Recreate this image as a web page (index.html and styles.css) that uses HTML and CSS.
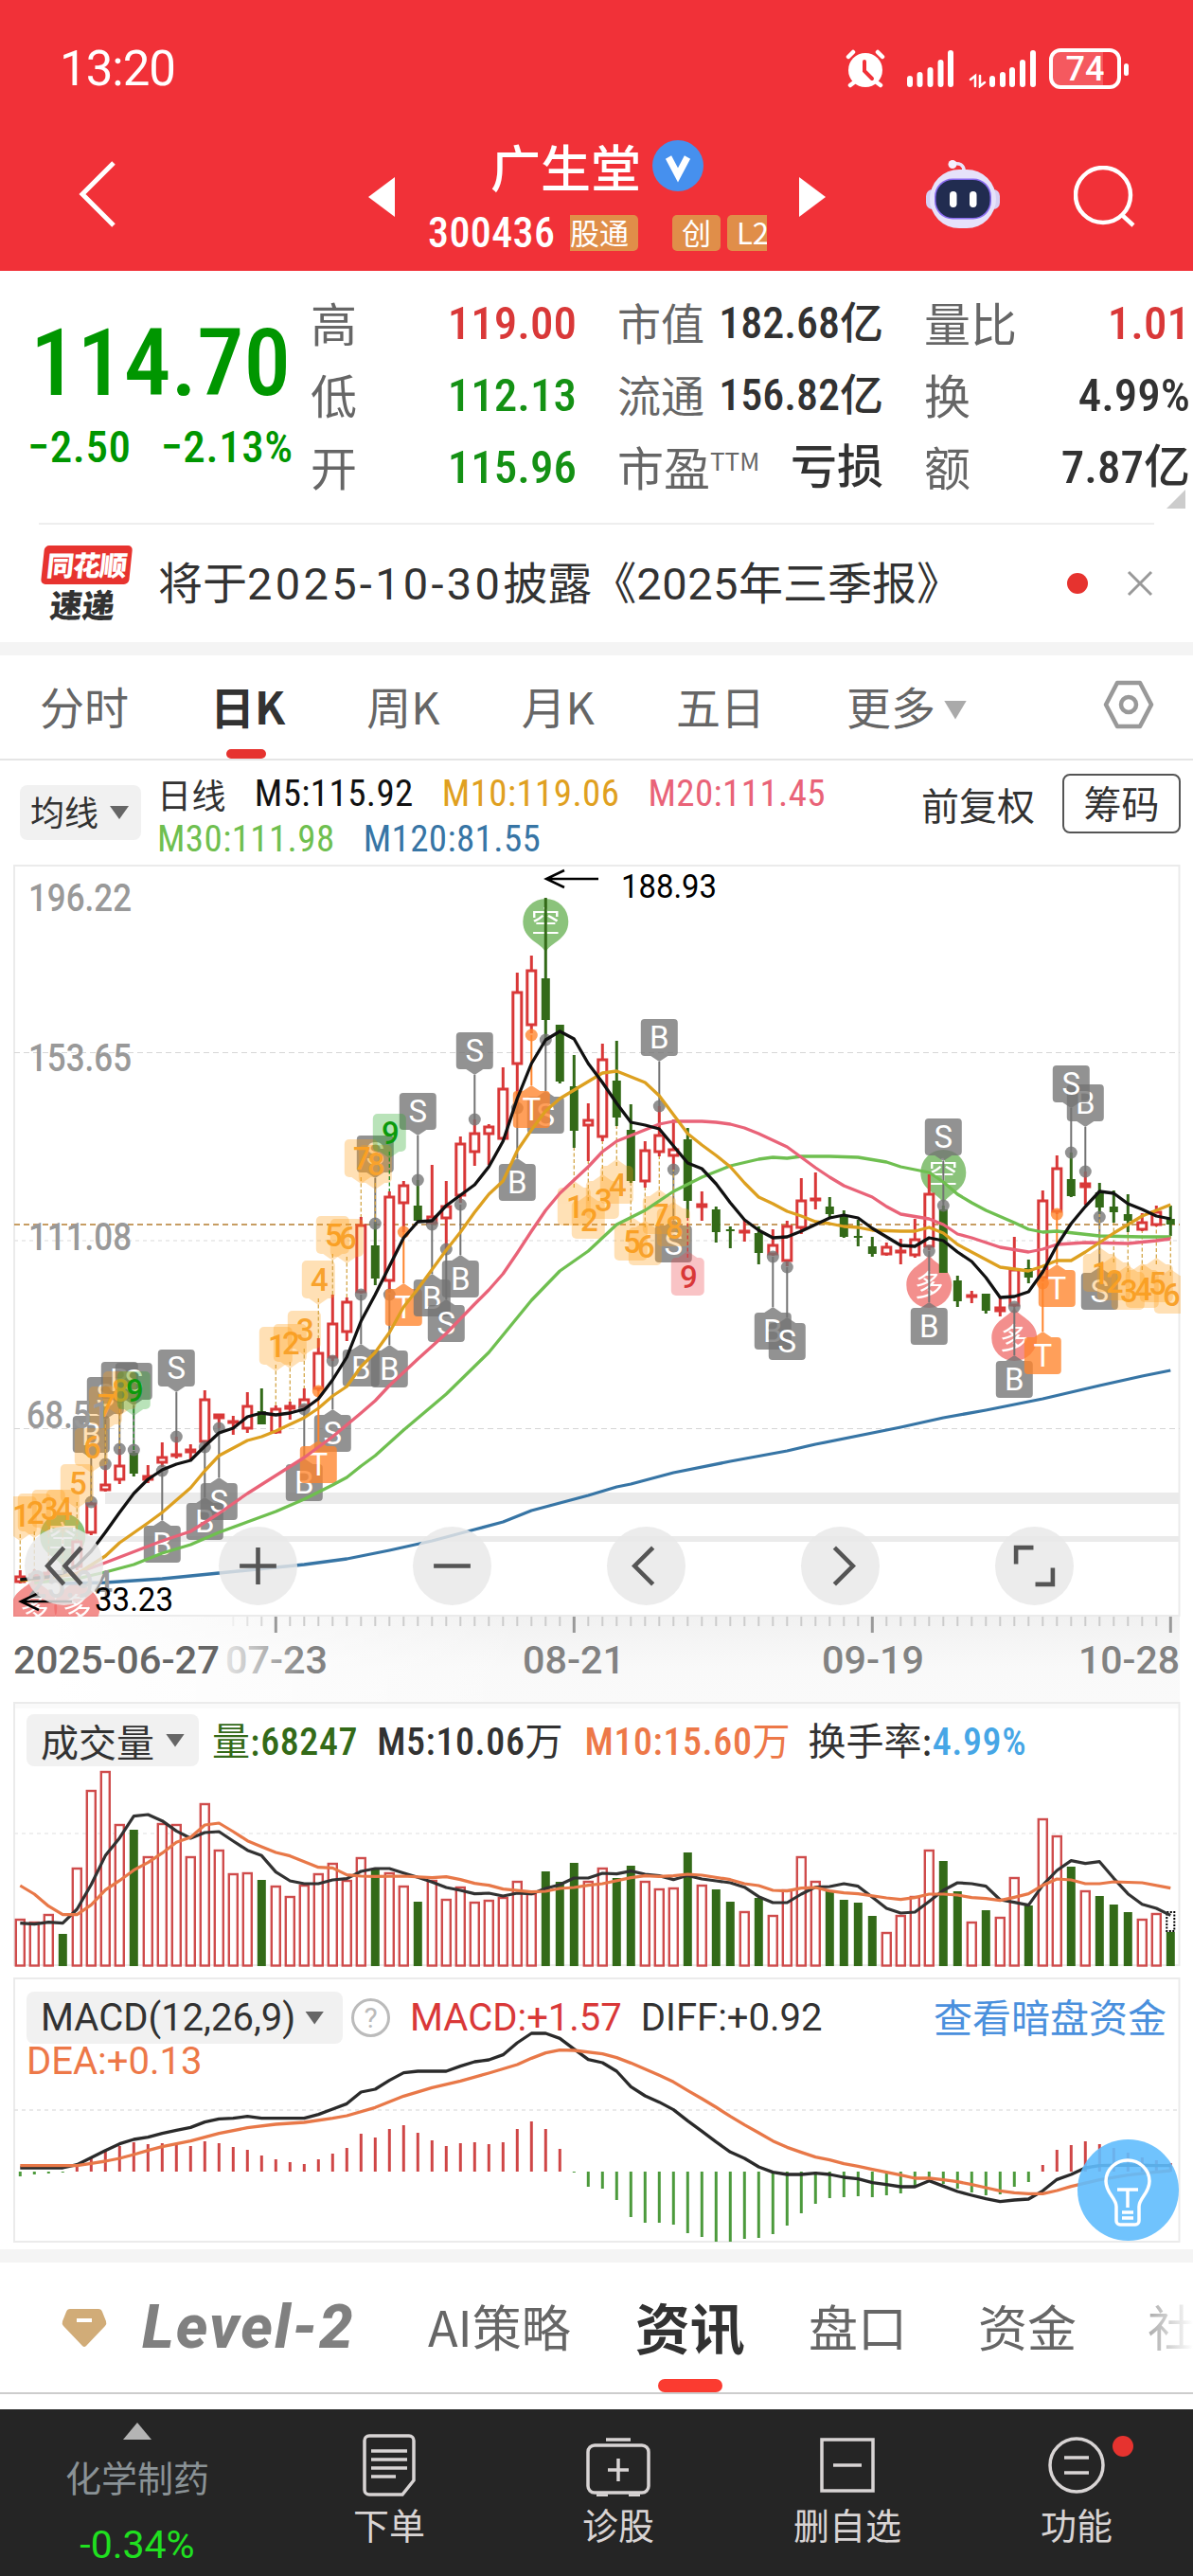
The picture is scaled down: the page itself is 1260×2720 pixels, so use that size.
FILE: index.html
```html
<!DOCTYPE html>
<html lang="zh-CN">
<head>
    <meta charset="UTF-8">
    <meta name="viewport" content="width=device-width, initial-scale=1.0">
    <title>广生堂 300436</title>
    <link rel="stylesheet" href="styles.css">
</head>
<body>
    <header class="header">
        <div class="status-bar">
            <span class="time num">13:20</span>
            <div class="status-icons">
                <svg width="42" height="42" viewBox="0 0 42 42" fill="none" stroke="#fff" stroke-width="4.500" stroke-linecap="round">
                    <circle cx="21" cy="23" r="18" fill="#fff" stroke="none"/>
                    <path d="M3 9l5-5M39 9l-5-5M9 36l-4 3M33 36l4 3" />
                    <path d="M20 14v10l8 8" stroke="#f13138" stroke-width="4"/>
                </svg>
                <svg class="signal" width="50" height="42" viewBox="0 0 50 42" stroke="#fff" stroke-width="6" stroke-linecap="round">
                    <path d="M3 32v6M13.500 28v10M24.500 23v15M35.500 15v23M46 5v33"/>
                </svg>
                <svg class="signal-two" width="72" height="42" viewBox="0 0 72 42" fill="none" stroke="#fff" stroke-width="6" stroke-linecap="round">
                    <path d="M2 33l5-4v11M12 29v11l5-4" stroke-width="2.500"/>
                    <path d="M25 32v6M36 28v10M46 23v15M57 15v23M68 5v33"/>
                </svg>
                <div class="battery"><span>74</span></div>
            </div>
        </div>
        <div class="nav-row">
            <svg class="back" width="42" height="72" viewBox="0 0 42 72" fill="none" stroke="#fff" stroke-width="5"><path d="M38 3L5 36l33 33"/></svg>
            <svg class="prev" width="28" height="42" viewBox="0 0 28 42" fill="#fff"><path d="M28 0v42L0 21z"/></svg>
            <div class="stock">
                <div class="stock-name">广生堂
                    <svg width="54" height="54" viewBox="0 0 54 54"><circle cx="27" cy="27" r="27" fill="#4690ee"/><path d="M17 18l10 19 10-19" fill="none" stroke="#fff" stroke-width="7"/></svg>
                </div>
                <div class="stock-code">
                    <span class="code num">300436</span>
                    <span class="tag tag-cut-left">股通</span>
                    <span class="tag tag-board">创</span>
                    <span class="tag tag-cut-right">L2</span>
                </div>
            </div>
            <svg class="next" width="28" height="42" viewBox="0 0 28 42" fill="#fff"><path d="M0 0v42l28-21z"/></svg>
            <svg class="robot" width="80" height="76" viewBox="0 0 80 76">
                <path d="M40 14C41 5 34 4 29 5" fill="none" stroke="#e9e4fb" stroke-width="3.500"/>
                <circle cx="28" cy="5.500" r="4.500" fill="#f4f0ff"/>
                <rect x="0" y="32" width="78" height="21" rx="7" fill="#d5d0f4"/>
                <rect x="4" y="11" width="70" height="62" rx="31" fill="#e6e2fa"/>
                <rect x="9" y="20.500" width="60" height="43" rx="19" fill="#8a6bf0"/>
                <rect x="10.500" y="22" width="57" height="40" rx="18" fill="#212c50"/>
                <rect x="25" y="34" width="7.500" height="17" rx="3.700" fill="#fff"/>
                <rect x="46" y="34" width="7.500" height="17" rx="3.700" fill="#fff"/>
            </svg>
            <svg class="search" width="66" height="66" viewBox="0 0 66 66" fill="none" stroke="#fff" stroke-width="4.500"><circle cx="31" cy="31" r="29"/><path d="M51 52l12 11"/></svg>
        </div>
    </header>

    <section class="quote">
        <div class="price-box">
            <div class="price num">114.70</div>
            <div class="change num"><span>−2.50</span><span>−2.13%</span></div>
        </div>
        <div class="quote-grid">
            <div class="cell"><label>高</label><b class="num up">119.00</b></div>
            <div class="cell mid"><label>市值</label><b class="num">182.68亿</b></div>
            <div class="cell"><label>量比</label><b class="num up">1.01</b></div>
            <div class="cell"><label>低</label><b class="num down">112.13</b></div>
            <div class="cell mid"><label>流通</label><b class="num">156.82亿</b></div>
            <div class="cell"><label>换</label><b class="num">4.99%</b></div>
            <div class="cell"><label>开</label><b class="num down">115.96</b></div>
            <div class="cell"><label>市盈<sup>TTM</sup></label><b class="num">亏损</b></div>
            <div class="cell"><label>额</label><b class="num">7.87亿</b></div>
        </div>
        <i class="corner"></i>
    </section>

    <section class="notice">
        <div class="notice-logo">
            <span class="logo-top">同花顺</span>
            <span class="logo-bottom">速递</span>
        </div>
        <p>将于<span class="num date">2025-10-30</span>披露《<span class="num">2025</span>年三季报》</p>
        <i class="dot"></i>
        <svg width="28" height="28" viewBox="0 0 28 28" stroke="#999" stroke-width="3"><path d="M2 2l24 24M26 2L2 26"/></svg>
    </section>

    <nav class="period-tabs">
        <span>分时</span>
        <span class="active">日K</span>
        <span>周K</span>
        <span>月K</span>
        <span>五日</span>
        <span class="more">更多<i class="caret"></i></span>
        <svg width="54" height="52" viewBox="0 0 54 52" fill="none" stroke="#999" stroke-width="4.500" stroke-linejoin="round"><path d="M15 3h24l12 23-12 23H15L3 26z"/><circle cx="27" cy="26" r="8"/></svg>
    </nav>

    <section class="ma-info">
        <div class="select ma-select">均线<i class="caret"></i></div>
        <div class="ma-values">
            <div><span class="cn">日线</span><span class="num m5">M5:115.92</span><span class="num m10">M10:119.06</span><span class="num m20">M20:111.45</span></div>
            <div><span class="num m30">M30:111.98</span><span class="num m120">M120:81.55</span></div>
        </div>
        <span class="adjust">前复权</span>
        <span class="chip">筹码</span>
    </section>

    <section class="panel kline">
        <svg id="kline" width="1260" height="884" viewBox="0 913 1260 884"></svg>
        <div class="tools">
            <button><svg viewBox="0 0 48 48"><path d="M24 5L7 24l17 19M42 5L25 24l17 19"/></svg></button>
            <button><svg viewBox="0 0 48 48"><path d="M24 5v38M5 24h38"/></svg></button>
            <button><svg viewBox="0 0 48 48"><path d="M5 24h38"/></svg></button>
            <button><svg viewBox="0 0 48 48"><path d="M31 5L12 24l19 19"/></svg></button>
            <button><svg viewBox="0 0 48 48"><path d="M18 5l19 19-19 19"/></svg></button>
            <button><svg viewBox="0 0 48 48"><path d="M23 5H5v17M43 26v17H25"/></svg></button>
        </div>
    </section>

    <section class="panel volume">
        <svg id="volume" width="1260" height="288" viewBox="0 7 1260 288"></svg>
        <div class="panel-head">
            <div class="select">成交量<i class="caret"></i></div>
            <span class="vol">量:<span class="num">68247</span></span>
            <span class="vol-m5"><span class="num">M5:10.06</span>万</span>
            <span class="vol-m10"><span class="num">M10:15.60</span>万</span>
            <span class="turnover">换手率:<span class="num">4.99%</span></span>
        </div>
    </section>

    <section class="panel macd">
        <svg id="macd" width="1260" height="290" viewBox="0 5 1260 290"></svg>
        <div class="panel-head">
            <div class="select num">MACD(12,26,9)<i class="caret"></i></div>
            <i class="help">?</i>
            <span class="num up macd-value">MACD:+1.57</span>
            <span class="num">DIFF:+0.92</span>
            <a class="dark-pool">查看暗盘资金</a>
        </div>
        <span class="num dea-value">DEA:+0.13</span>
        <div class="bulb">
            <svg width="60" height="72" viewBox="0 0 60 72" fill="none" stroke="#fff" stroke-width="3.500" stroke-linejoin="round"><path d="M18 51c0-9-11-14-11-27a23 22 0 0 1 46 0c0 13-11 18-11 27v15a4 4 0 0 1-4 4H22a4 4 0 0 1-4-4zM24 57h12M24 63h12M19 33h22M30 33v19"/></svg>
        </div>
    </section>

    <nav class="info-tabs">
        <svg width="48" height="42" viewBox="0 0 48 42"><path d="M9 1h30q3 0 4 3l4 10q1 3-1 5L26 40q-2 2-4 0L2 19q-2-2-1-5L5 4q1-3 4-3z" fill="#d1ac78"/><path d="M16 13h16" stroke="#fff" stroke-width="4"/></svg>
        <span class="level">Level-2</span>
        <span class="first">AI策略</span>
        <span class="active">资讯</span>
        <span>盘口</span>
        <span>资金</span>
        <span class="fade">社</span>
    </nav>

    <footer class="bottom-bar">
        <div class="sector">
            <i class="arrow-up"></i>
            <span>化学制药</span>
            <b class="num">-0.34%</b>
        </div>
        <div class="action">
            <svg width="58" height="66" viewBox="0 0 58 66"><path d="M8 2h42a5 5 0 0 1 5 5v42L43 64H8a5 5 0 0 1-5-5V7a5 5 0 0 1 5-5zM10 18h38M10 27h38M10 36h38M10 45h26"/></svg>
            <span>下单</span>
        </div>
        <div class="action">
            <svg width="70" height="66" viewBox="0 0 70 66"><rect x="3" y="12" width="64" height="50" rx="7"/><path d="M22 6h26M35 26v24M24 38h22M12 65h12M46 65h12"/></svg>
            <span>诊股</span>
        </div>
        <div class="action">
            <svg width="58" height="66" viewBox="0 0 58 66"><rect x="2" y="6" width="54" height="54"/><path d="M14 33h30"/></svg>
            <span>删自选</span>
        </div>
        <div class="action">
            <svg width="62" height="66" viewBox="0 0 62 66"><circle cx="31" cy="33" r="28"/><path d="M18 25h26M18 41h26"/></svg>
            <span>功能</span>
            <i class="badge-dot"></i>
        </div>
    </footer>

    <script src="script.js"></script>
</body>
</html>
```

FILE: styles.css
```css
* {
    box-sizing: border-box;
}
body {
    margin: 0;
    width: 1260px;
    height: 2720px;
    overflow: hidden;
    background: #fff;
    color: #323232;
    font-family: "Noto Sans CJK SC", sans-serif;
    line-height: 1;
}
svg {
    display: block;
    flex: none;
}
i, b, sup {
    font-style: normal;
    font-weight: 500;
}
span, label, b {
    white-space: nowrap;
}
.num {
    font-family: Roboto, "Noto Sans CJK SC", sans-serif;
    font-stretch: 87%;
}
.up {
    color: #d93838;
}
.down {
    color: #149114;
}
.caret {
    display: inline-block;
    width: 20px;
    height: 14px;
    background: #666;
    clip-path: polygon(0 0, 100% 0, 50% 100%);
}

/* header */
.header {
    height: 286px;
    background: #f13138;
    color: #fff;
}
.status-bar {
    height: 140px;
    padding: 4px 68px 0 63px;
    display: flex;
    align-items: center;
    justify-content: space-between;
}
.time {
    font-size: 51px;
    font-stretch: 100%;
    letter-spacing: -1px;
}
.status-icons {
    display: flex;
    align-items: center;
}
.signal {
    margin-left: 23px;
}
.signal-two {
    margin: 0 13px 0 15px;
}
.battery {
    position: relative;
    width: 76px;
    height: 43px;
    margin-right: 8px;
    border: 4px solid #fff;
    border-radius: 12px;
    background: linear-gradient(90deg, #f5595f 78%, transparent 78%);
    font: 500 36px/36px Roboto, sans-serif;
    text-align: center;
}
.battery::after {
    content: "";
    position: absolute;
    right: -12px;
    top: 12px;
    width: 5px;
    height: 13px;
    border-radius: 3px;
    background: #fff;
}
.nav-row {
    display: flex;
    padding-left: 82px;
}
.back {
    margin-top: 29px;
}
.prev {
    margin: 47px 0 0 265px;
}
.stock {
    width: 427px;
    padding: 7px 0 0 35px;
}
.stock-name {
    height: 56px;
    display: flex;
    align-items: center;
    padding-left: 66px;
    gap: 12px;
    font-size: 53px;
    font-weight: 500;
}
.stock-code {
    display: flex;
    align-items: center;
    margin-top: 23px;
    height: 40px;
}
.code {
    width: 150px;
    font-size: 44px;
    font-weight: 500;
    letter-spacing: 0.4px;
}
.tag {
    height: 38px;
    padding: 0 10px;
    border-radius: 5px;
    background: #e08e49;
    font-size: 31px;
    line-height: 36px;
}
.tag-cut-left {
    padding-left: 0;
    border-radius: 0 5px 5px 0;
}
.tag-board {
    margin: 0 7px 0 36px;
}
.tag-cut-right {
    width: 42px;
    padding-right: 0;
    border-radius: 5px 0 0 5px;
    overflow: hidden;
}
.next {
    margin-top: 47px;
}
.robot {
    margin: 28px 0 0 106px;
}
.search {
    margin: 35px 0 0 76px;
}

/* quote */
.quote {
    position: relative;
    display: flex;
    height: 268px;
}
.quote::after {
    content: "";
    position: absolute;
    left: 41px;
    right: 41px;
    bottom: 0;
    border-bottom: 2px solid #eee;
}
.price-box {
    flex: none;
    width: 328px;
    padding: 48px 0 0 32px;
    color: #009600;
}
.price {
    font-size: 99px;
    font-weight: 500;
    letter-spacing: 0;
}
.change {
    display: flex;
    gap: 31px;
    margin: 15px 0 0 -3px;
    font-size: 47px;
    font-weight: 500;
    letter-spacing: 0.6px;
}
.quote-grid {
    display: grid;
    flex: none;
    grid-template-columns: 281px 281px 281px;
    grid-auto-rows: 76px;
    column-gap: 43px;
    padding-top: 17px;
}
.cell {
    display: flex;
    align-items: center;
    justify-content: space-between;
    font-size: 49px;
}
.cell label {
    margin-top: -4px;
    color: #666;
}
.cell.mid {
    font-size: 46px;
}
.cell sup {
    font-size: 26px;
    font-weight: 400;
    vertical-align: 16px;
    line-height: 0;
}
.corner {
    position: absolute;
    right: 8px;
    bottom: 17px;
    border: 10px solid transparent;
    border-right-color: #ccc;
    border-bottom-color: #ccc;
}

/* notice */
.notice {
    display: flex;
    align-items: center;
    height: 138px;
    padding: 0 41px;
    border-bottom: 14px solid #f4f4f4;
}
.notice-logo {
    width: 93px;
    height: 80px;
    margin: 0 3px 0 2px;
    text-align: center;
    transform: skewX(-6deg);
    font-weight: 900;
}
.logo-top, .logo-bottom {
    display: block;
}
.logo-top {
    height: 41px;
    border-radius: 5px;
    background: #e7332f;
    color: #fff;
    font-size: 29px;
    line-height: 38px;
    letter-spacing: -1px;
}
.logo-bottom {
    font-size: 34px;
    line-height: 42px;
}
.notice p {
    width: 942px;
    margin: -4px 0 0 28px;
    font-size: 47px;
    white-space: nowrap;
}
.notice .num {
    font-stretch: 100%;
    letter-spacing: 0.5px;
}
.notice .date {
    letter-spacing: 3.3px;
}
.dot {
    width: 22px;
    height: 22px;
    margin: 0 41px 0 18px;
    border-radius: 50%;
    background: #e6332f;
}

/* period tabs */
.period-tabs {
    display: flex;
    align-items: center;
    height: 111px;
    padding: 0 0 5px 42px;
    border-bottom: 2px solid #e5e5e5;
    color: #666;
    font-size: 47px;
}
.period-tabs span {
    position: relative;
    margin-right: 86px;
}
.period-tabs .active {
    color: #323232;
    font-weight: 700;
}
.period-tabs .active::after {
    content: "";
    position: absolute;
    left: 17px;
    bottom: -33px;
    width: 42px;
    height: 10px;
    border-radius: 5px;
    background: #e6332f;
}
.period-tabs .more {
    margin: 0 144px 0 0;
}
.more .caret {
    width: 24px;
    height: 20px;
    margin-left: 9px;
    background: #aaa;
    vertical-align: 5px;
}

/* moving averages */
.ma-info {
    display: flex;
    height: 110px;
    padding-left: 21px;
}
.select {
    display: flex;
    flex: none;
    align-items: center;
    gap: 12px;
    height: 55px;
    padding: 0 15px;
    border-radius: 8px;
    background: #f1f1f1;
    white-space: nowrap;
}
.ma-select {
    width: 128px;
    height: 58px;
    margin-top: 26px;
    padding: 0 11px 4px;
    font-size: 36px;
}
.ma-select .caret {
    margin-top: 4px;
}
.ma-values {
    flex: none;
    width: 824px;
    padding: 11px 0 0 17px;
    font-size: 39px;
    letter-spacing: 0.4px;
}
.ma-values div {
    display: flex;
    align-items: center;
    gap: 30px;
    height: 48px;
}
.ma-values .cn {
    font-size: 36px;
}
.m5 { color: #111; }
.m10 { color: #e0a020; }
.m20 { color: #e96378; }
.m30 { color: #6fbf50; }
.m120 { color: #3775a5; }
.adjust {
    width: 149px;
    margin-top: 26px;
    font-size: 40px;
}
.chip {
    width: 125px;
    height: 63px;
    margin-top: 14px;
    border: 2px solid #555;
    border-radius: 8px;
    font-size: 40px;
    line-height: 57px;
    text-align: center;
}

/* chart panels */
.panel {
    position: relative;
}
.panel text {
    font-family: Roboto, "Noto Sans CJK SC", sans-serif;
}
.kline {
    height: 884px;
}
.tools {
    position: absolute;
    left: 26px;
    top: 699px;
    width: 1108px;
    display: flex;
    justify-content: space-between;
}
.tools button {
    width: 83px;
    height: 83px;
    padding: 17px;
    border: none;
    border-radius: 50%;
    background: rgba(232, 232, 232, 0.82);
}
.tools svg {
    width: 49px;
    height: 49px;
    fill: none;
    stroke: #555;
    stroke-width: 4.5;
}
.panel-head {
    position: absolute;
    left: 28px;
    right: 28px;
    top: 13px;
    height: 55px;
    display: flex;
    align-items: center;
    font-size: 40px;
}
.volume {
    height: 288px;
}
.volume .num {
    font-weight: 500;
    letter-spacing: 0.6px;
}
.vol {
    margin: 0 20px 0 14px;
    color: #336a18;
}
.vol-m5 {
    margin-right: 23px;
}
.vol-m10 {
    margin-right: 19px;
    color: #ed7848;
}
.turnover .num {
    color: #46a6e6;
}
.macd {
    height: 290px;
}
.macd .num {
    font-stretch: 100%;
}
.macd .panel-head {
    top: 18px;
}
.macd .select {
    width: 334px;
    gap: 10px;
}
.help {
    width: 41px;
    height: 41px;
    margin: 0 21px 0 9px;
    border: 3px solid #bbb;
    border-radius: 50%;
    color: #bbb;
    font: 30px/35px Roboto, sans-serif;
    text-align: center;
}
.macd-value {
    margin-right: 20px;
}
.dark-pool {
    margin: -4px 0 0 auto;
    color: #4a90dd;
    font-size: 41px;
}
.dea-value {
    position: absolute;
    left: 28px;
    top: 72px;
    color: #ed7848;
    font-size: 40px;
}
.bulb {
    position: absolute;
    left: 1138px;
    top: 174px;
    width: 107px;
    height: 107px;
    padding: 20px 23px;
    border-radius: 50%;
    background: rgba(96, 188, 253, 0.9);
}

/* info tabs */
.info-tabs {
    display: flex;
    align-items: center;
    height: 153px;
    padding-left: 65px;
    border-top: 14px solid #f4f4f4;
    border-bottom: 2px solid #ccc;
    color: #666;
    font-size: 52px;
    overflow: hidden;
}
.info-tabs span {
    position: relative;
    flex: none;
    margin: -3px 75px 0 0;
}
.info-tabs .level {
    width: 225px;
    margin: 0 77px 0 37px;
    color: #808080;
    font: italic 800 64px Roboto, sans-serif;
    letter-spacing: 2px;
}
.info-tabs .first {
    margin-right: 68px;
}
.info-tabs .active {
    margin-right: 67px;
    color: #323232;
    font-size: 58px;
    font-weight: 700;
}
.info-tabs .active::after {
    content: "";
    position: absolute;
    left: 24px;
    bottom: -41px;
    width: 68px;
    height: 14px;
    border-radius: 7px;
    background: #fb3b30;
}
.info-tabs .fade {
    margin-right: 0;
    background: linear-gradient(90deg, #aaa, #fff 48px);
    background-clip: text;
    -webkit-background-clip: text;
    color: transparent;
}

/* bottom bar */
.bottom-bar {
    display: grid;
    grid-template-columns: 290px repeat(4, 242px);
    height: 176px;
    margin-top: 16px;
    background: #252525;
    color: #d8d4d4;
    font-size: 38px;
}
.sector {
    display: flex;
    flex-direction: column;
    align-items: center;
    color: #8a9296;
}
.arrow-up {
    width: 30px;
    height: 18px;
    margin: 14px 0 20px;
    background: #b4b4b4;
    clip-path: polygon(50% 0, 100% 100%, 0 100%);
}
.sector b {
    margin-top: 33px;
    color: #20e020;
    font-size: 41px;
    font-weight: 400;
    font-stretch: 100%;
}
.action {
    position: relative;
    display: flex;
    flex-direction: column;
    align-items: center;
    gap: 10px;
    padding-top: 26px;
}
.action svg {
    fill: none;
    stroke: #d8d4d4;
    stroke-width: 3.5;
}
.badge-dot {
    position: absolute;
    left: 159px;
    top: 28px;
    width: 22px;
    height: 22px;
    border-radius: 50%;
    background: #e6332f;
}
```

FILE: script.js
```js
const RED = '#d93838';
const GREEN = '#336a18';
const STEP = 15;
const X0 = 21.3;
const x = i => X0 + i * STEP;

function add(parent, tag, attrs, text) {
    const el = document.createElementNS('http://www.w3.org/2000/svg', tag);
    for (const key in attrs) el.setAttribute(key, attrs[key]);
    if (text !== undefined) el.textContent = text;
    parent.appendChild(el);
    return el;
}

// points: [index, y, index, y, ...]
function curve(svg, points, color, width, scale = 1) {
    let d = '';
    for (let n = 0; n < points.length; n += 2) {
        d += (n ? 'L' : 'M') + x(points[n]) + ' ' + points[n + 1] / scale;
    }
    add(svg, 'path', { d, fill: 'none', stroke: color, 'stroke-width': width, 'stroke-linejoin': 'round' });
}

function hline(svg, y, color, width, dash) {
    add(svg, 'path', { d: `M15 ${y}H1246`, stroke: color, 'stroke-width': width, 'stroke-dasharray': dash || 'none' });
}

function label(svg, text, left, base, width, size, color, weight = 400) {
    add(svg, 'text', { x: left, y: base, 'font-size': size, 'font-weight': weight, fill: color, textLength: width, lengthAdjust: 'spacingAndGlyphs' }, text);
}

// high, body top, body bottom, low, falling
const candles = [
    [1658,1664,1671,1672,0],[1657,1662,1667,1669,0],[1655,1660,1664,1667,0],[1655,1658,1662,1664,1],[1625,1627,1655,1658,0],
    [1586,1587,1619,1621,0],[1547,1567,1574,1575,0],[1530,1547,1563,1567,0],[1532,1534,1556,1559,1],[1547,1558,1563,1566,0],
    [1523,1538,1545,1549,0],[1517,1535,1538,1540,0],[1525,1530,1534,1543,0],[1468,1477,1523,1527,0],[1493,1493,1498,1508,0],
    [1495,1500,1503,1515,0],[1470,1484,1509,1513,0],[1466,1490,1504,1504,1],[1484,1487,1513,1514,0],[1480,1484,1488,1499,0],
    [1466,1477,1486,1490,0],[1413,1428,1467,1469,0],[1367,1397,1434,1437,0],[1370,1374,1407,1416,0],[1285,1293,1365,1366,0],
    [1290,1315,1350,1357,1],[1258,1263,1353,1365,0],[1247,1251,1271,1301,0],[1246,1273,1289,1289,1],[1230,1284,1292,1293,0],
    [1247,1273,1287,1319,0],[1200,1207,1263,1270,0],[1182,1196,1217,1231,0],[1187,1189,1198,1230,0],[1127,1149,1203,1204,0],
    [1027,1047,1124,1170,0],[1009,1024,1083,1091,0],[948,1033,1077,1098,1],[1082,1082,1142,1144,1],[1114,1147,1194,1212,1],
    [1165,1182,1189,1226,0],[1102,1118,1201,1205,0],[1099,1141,1180,1189,1],[1166,1193,1247,1249,1],[1205,1214,1248,1254,0],
    [1168,1198,1217,1221,0],[1182,1213,1221,1235,0],[1191,1203,1268,1286,1],[1258,1271,1275,1289,0],[1274,1277,1301,1312,1],
    [1295,1298,1299,1318,1],[1287,1299,1302,1311,0],[1295,1302,1323,1335,1],[1298,1314,1325,1326,0],[1289,1294,1332,1337,0],
    [1244,1267,1297,1303,0],[1238,1265,1268,1277,0],[1264,1274,1282,1287,1],[1278,1284,1306,1307,1],[1288,1305,1307,1316,1],
    [1306,1316,1324,1327,1],[1312,1316,1325,1326,0],[1308,1320,1323,1335,0],[1287,1308,1326,1328,0],[1240,1260,1317,1320,0],
    [1273,1277,1344,1344,1],[1347,1352,1374,1380,1],[1363,1367,1370,1376,0],[1366,1366,1384,1387,1],[1369,1380,1385,1390,0],
    [1306,1340,1379,1380,0],[1330,1339,1349,1355,1],[1257,1267,1350,1353,0],[1220,1233,1280,1282,0],[1217,1245,1263,1264,1],
    [1237,1249,1254,1272,0],[1249,1259,1275,1282,1],[1257,1274,1280,1291,1],[1261,1282,1289,1301,1],[1281,1290,1299,1300,0],
    [1273,1279,1294,1295,0],[1273,1287,1293,1305,1]
];

const ma5 = [0,1668,2,1665,3,1661,4,1653,5,1638,6,1618,7,1597,8,1577,9,1562,10,1552,11,1546,12,1542,13,1527,14,1513,15,1508,16,1496,17,1492,18,1494,19,1492,20,1488,21,1477,22,1457,23,1433,24,1395,25,1367,26,1337,27,1307,28,1290,29,1289,30,1273,31,1262,32,1251,33,1232,34,1205,35,1160,36,1123,37,1098,38,1089,39,1097,40,1123,41,1143,42,1165,43,1185,44,1188,45,1192,46,1210,47,1228,48,1234,49,1250,50,1270,51,1288,52,1299,53,1307,54,1306,55,1300,56,1293,57,1286,58,1283,59,1286,60,1297,61,1306,62,1315,63,1316,64,1307,65,1310,66,1322,67,1332,68,1349,69,1370,70,1369,71,1364,72,1343,73,1315,74,1292,75,1274,76,1258,77,1260,78,1271,79,1277,80,1284,81,1287];
const ma10 = [0,1669,4,1662,6,1643,7,1629,9,1608,10,1597,12,1571,13,1553,14,1537,16,1521,17,1517,18,1511,20,1497,21,1487,22,1474,23,1464,24,1443,25,1428,26,1407,27,1380,28,1361,30,1320,31,1301,32,1280,33,1261,34,1247,35,1215,36,1193,37,1173,38,1160,39,1151,40,1142,41,1133,42,1131,43,1137,44,1143,45,1157,46,1177,47,1197,48,1209,49,1220,50,1232,51,1249,52,1264,53,1271,54,1279,55,1284,56,1290,57,1292,58,1295,59,1296,60,1299,62,1300,63,1300,64,1296,65,1302,66,1314,68,1330,69,1338,71,1342,72,1337,73,1331,74,1331,75,1322,77,1302,78,1293,79,1284,81,1272];
const ma20 = [1,1669,4,1661,6,1650,10,1627,12,1617,14,1598,16,1577,18,1558,20,1539,21,1528,22,1517,24,1492,25,1479,26,1463,28,1435,30,1408,32,1377,33,1362,34,1345,35,1323,36,1300,37,1278,38,1260,40,1232,41,1216,42,1205,43,1199,44,1193,45,1187,46,1184,48,1184,49,1185,50,1187,51,1191,52,1197,54,1211,55,1222,56,1233,57,1243,58,1252,60,1264,61,1274,62,1282,64,1287,65,1293,66,1303,67,1307,69,1317,71,1322,72,1319,73,1314,75,1312,78,1313,80,1310,81,1308];
const ma30 = [1,1671,4,1667,6,1660,8,1652,10,1640,12,1631,14,1618,16,1607,18,1596,20,1583,22,1568,23,1560,24,1548,25,1537,27,1510,30,1472,33,1428,36,1373,38,1342,40,1321,42,1293,44,1278,46,1258,48,1243,50,1231,52,1224,53,1222,54,1223,55,1221,57,1221,59,1222,61,1227,62,1232,64,1238,65,1248,66,1261,67,1270,68,1278,70,1291,71,1298,72,1301,73,1300,76,1305,79,1306,81,1306];
const ma120 = [3,1672,6,1671,10,1667,14,1661,18,1655,20,1652,23,1646,26,1637,29,1627,32,1615,34,1607,36,1595,38,1587,40,1579,42,1570,43,1567,46,1555,50,1543,54,1532,56,1525,62,1507,65,1497,68,1489,72,1477,76,1463,79,1453,81,1447];

// index, letter, box top, dot y
const trades = [
    [5,'B',1495,1586],[6,'S',1454,1546],[7,'B',1438,1530],[8,'S',1439,1531],[11,'S',1425,1517],[10,'B',1611,1553],
    [13,'B',1587,1528],[14,'S',1566,1508],[20,'B',1546,1488],[22,'S',1494,1437],[21,'T',1527,1469],[24,'B',1425,1367],
    [26,'B',1426,1367],[27,'T',1361,1301],[29,'B',1351,1293],[30,'S',1378,1319],[31,'B',1331,1272],[25,'S',1199,1292],
    [28,'S',1154,1246],[32,'S',1090,1182],[35,'B',1229,1170],[37,'S',1158,1098],[36,'T',1152,1093],[45,'B',1076,1168],
    [46,'S',1294,1235],[53,'B',1386,1327],[54,'S',1397,1338],[65,'S',1181,1273],[64,'B',1381,1321],[75,'B',1145,1237],
    [74,'S',1125,1217],[70,'B',1437,1380],[72,'T',1412,1355],[73,'T',1341,1282],[76,'S',1344,1285]
];

// index, digit, box top, candle end, colour key
const counts = [
    [0,1,1580,1659],[1,2,1577,1657],[2,3,1573,1655],[3,4,1573,1655],[4,5,1546,1627],[5,6,1508,1586],[6,7,1464,1546],
    [7,8,1448,1530],[8,9,1448,1531,'g'],[18,1,1401,1484],[19,2,1398,1480],[20,3,1384,1466],[21,4,1331,1413],
    [22,5,1284,1367],[23,6,1287,1370],[24,7,1203,1285],[25,8,1209,1290],[26,9,1176,1258,'g'],[39,1,1254,1212],
    [40,2,1268,1226],[41,3,1247,1205],[42,4,1231,1189],[43,5,1291,1249],[44,6,1296,1254],[45,7,1263,1221],
    [46,8,1276,1235],[47,9,1328,1286,'r'],[76,1,1324,1282],[77,2,1333,1291],[78,3,1343,1301],[79,4,1341,1300],
    [80,5,1335,1295],[81,6,1347,1305]
];
const countColors = {
    o: ['#ff9d14', '#f8a22c', '#d3a64a'],
    g: ['#22a822', '#0b9a0b', '#1e8c1e'],
    r: ['#ec4048', '#d93838', '#d93838']
};

function drawKline() {
    const svg = document.getElementById('kline');

    const defs = add(svg, 'defs', {});
    const shade = add(defs, 'linearGradient', { id: 'shade', x1: 0, y1: 0, x2: 0, y2: 1 });
    add(shade, 'stop', { offset: 0, 'stop-color': '#f1f1f1' });
    add(shade, 'stop', { offset: 0.6, 'stop-color': '#f9f9f9' });
    add(shade, 'stop', { offset: 1, 'stop-color': '#fafafa' });
    const left = add(defs, 'linearGradient', { id: 'left', x1: 0, y1: 0, x2: 1, y2: 0 });
    add(left, 'stop', { offset: 0.1, 'stop-color': '#fff' });
    add(left, 'stop', { offset: 1, 'stop-color': '#fff', 'stop-opacity': 0 });
    const dateFade = add(defs, 'linearGradient', { id: 'dateFade', x1: 0, y1: 0, x2: 1, y2: 0 });
    add(dateFade, 'stop', { offset: 0, 'stop-color': '#e4e4e4' });
    add(dateFade, 'stop', { offset: 0.8, 'stop-color': '#828282' });
    const clip = add(defs, 'clipPath', { id: 'plot' });
    add(clip, 'rect', { x: 14, y: 913, width: 1233, height: 794 });

    add(svg, 'rect', { x: 0, y: 1707, width: 1246, height: 90, fill: 'url(#shade)' });
    add(svg, 'rect', { x: 0, y: 1707, width: 560, height: 90, fill: 'url(#left)' });

    add(svg, 'rect', { x: 15, y: 914, width: 1230.5, height: 792, fill: 'none', stroke: '#ebebeb', 'stroke-width': 2 });
    add(svg, 'rect', { x: 111, y: 1576, width: 1135, height: 12, fill: '#ebebeb' });
    add(svg, 'rect', { x: 80, y: 1622, width: 1166, height: 6, fill: '#ebebeb' });
    hline(svg, 1111.5, '#d6d6d6', 1, '6 4');
    hline(svg, 1310, '#e6e6e6', 1.5, '4 4');
    hline(svg, 1508.5, '#d6d6d6', 1, '6 4');
    hline(svg, 1293, '#c79d63', 2, '6 4');

    const plot = add(svg, 'g', { 'clip-path': 'url(#plot)' });

    label(svg, '196.22', 30, 962, 109, 40, '#999', 500);
    label(svg, '153.65', 30, 1131, 109, 40, '#999', 500);
    label(svg, '111.08', 30, 1320, 109, 40, '#999', 500);
    label(svg, '68.51', 28, 1508, 88, 40, '#999', 500);
    label(svg, '25.94', 29, 1687, 90, 40, '#999', 500);

    // long / short pins
    const pins = [[37,'空',973],[65,'空',1238],[3,'空',1622],[64,'多',1357],[70,'多',1413],[1,'多',1698],[4,'多',1698]];
    pins.forEach(([i, text, cy]) => {
        const down = text === '空';
        const s = down ? 1 : -1;
        const g = add(plot, 'g', { opacity: 0.75 });
        add(g, 'path', { d: `M${x(i) - 24} ${cy}A24 24 0 0 ${down ? 1 : 0} ${x(i) + 24} ${cy}C${x(i) + 24} ${cy + 20 * s} ${x(i) + 4} ${cy + 22 * s} ${x(i)} ${cy + 33 * s}C${x(i) - 4} ${cy + 22 * s} ${x(i) - 24} ${cy + 20 * s} ${x(i) - 24} ${cy}`, fill: down ? '#65b04f' : '#f06a68' });
        add(g, 'text', { x: x(i), y: cy + 11, 'font-size': 31, fill: '#fff', 'text-anchor': 'middle' }, text);
    });

    candles.forEach(([hi, top, bottom, lo, falling], i) => {
        const color = falling ? GREEN : RED;
        add(plot, 'path', { d: `M${x(i)} ${hi}V${top}M${x(i)} ${bottom}V${lo}`, stroke: color, 'stroke-width': 3 });
        if (falling) {
            add(plot, 'rect', { x: x(i) - 4.5, y: top, width: 9, height: Math.max(2, bottom - top), fill: color });
        } else {
            add(plot, 'rect', { x: x(i) - 4.5, y: top + 1, width: 9, height: Math.max(1, bottom - top - 2), fill: '#fff', stroke: color, 'stroke-width': 3 });
        }
    });

    trades.forEach(([i, letter, top, dot]) => {
        const above = top < dot;
        const color = letter === 'T' ? '#ff842c' : '#737373';
        const edge = above ? top + 39 : top;
        const tip = above ? edge + 6 : edge - 6;
        const g = add(plot, 'g', {});
        add(g, 'path', { d: `M${x(i)} ${tip}V${dot}`, stroke: color, 'stroke-width': 2 });
        add(g, 'circle', { cx: x(i), cy: dot, r: 6.5, fill: color, opacity: 0.78 });
        add(g, 'path', { d: `M${x(i) - 9} ${edge}h18L${x(i)} ${tip}z`, fill: color, opacity: 0.78 });
        add(g, 'rect', { x: x(i) - 19.5, y: top, width: 39, height: 39, rx: 4, fill: color, opacity: 0.78 });
        add(g, 'text', { x: x(i), y: top + 31, 'font-size': 33, fill: '#fff', 'text-anchor': 'middle' }, letter);
    });

    counts.forEach(([i, digit, top, end, key]) => {
        const [fill, ink, line] = countColors[key || 'o'];
        const above = top < end;
        const edge = above ? top + 40 : top;
        add(plot, 'path', { d: `M${x(i)} ${edge}V${end}`, stroke: line, 'stroke-width': 1.3, 'stroke-dasharray': '4 2.5' });
        const g = add(plot, 'g', { opacity: 0.31 });
        add(g, 'path', { d: `M${x(i) - 10} ${edge}h20l-10 ${above ? 7 : -7}z`, fill });
        add(g, 'rect', { x: x(i) - 17.5, y: top, width: 35, height: 40, rx: 5, fill });
        add(plot, 'text', { x: x(i) + 1, y: top + 32, 'font-size': 33, 'font-weight': 500, fill: ink, 'text-anchor': 'middle' }, digit);
    });

    curve(plot, ma120, '#3775a5', 3.3);
    curve(plot, ma30, '#6fbf50', 3.3);
    curve(plot, ma20, '#e96378', 3.3);
    curve(plot, ma10, '#dda020', 3.3);
    curve(plot, ma5, '#111', 3.3);

    const arrow = { fill: 'none', stroke: '#000', 'stroke-width': 2.5 };
    add(svg, 'path', { d: 'M632 928H577M596 919l-19 9 19 9', ...arrow });
    label(svg, '188.93', 656, 948, 101, 35, '#000');
    add(svg, 'path', { d: 'M76 1691H22M41 1682l-19 9 19 9', ...arrow });
    label(svg, '33.23', 100, 1701, 83, 35, '#000');

    for (let i = 15; i < 82; i++) {
        const major = (i - 18) % 21 === 0;
        add(svg, 'path', { d: `M${x(i)} 1707V${major ? 1724 : 1717}`, stroke: major ? '#999' : '#ccc', 'stroke-width': major ? 3 : 2, opacity: i < 18 ? (i - 14) * 0.25 : 1 });
    }
    label(svg, '2025-06-27', 14, 1767, 218, 40, '#666', 500);
    label(svg, '07-23', 238, 1767, 108, 40, 'url(#dateFade)', 500);
    label(svg, '08-21', 552, 1767, 108, 40, '#828282', 500);
    label(svg, '09-19', 868, 1767, 108, 40, '#828282', 500);
    label(svg, '10-28', 1139, 1767, 107, 40, '#828282', 500);
}

const volumes = [
    50,47,55,34,104,186,206,150,144,116,151,150,116,172,123,98,99,91,85,74,86,98,109,91,115,102,99,85,68,91,71,84,68,70,73,90,77,100,89,109,90,
    104,93,106,90,82,83,120,86,81,68,58,72,54,81,116,90,80,70,67,53,36,54,74,123,111,79,47,59,52,94,64,156,138,105,80,74,65,57,50,56,36
];
const volMa5 = [722,725,719,722,678,600,508,452,383,378,398,430,453,435,432,462,491,508,560,588,597,597,585,581,558,549,549,563,577,592,609,618,629,627,636,627,629,612,600,579,579,564,566,557,567,572,584,571,582,588,594,608,638,657,657,630,608,606,597,605,640,675,690,687,653,618,594,597,605,648,656,665,602,555,524,533,527,580,629,662,675,697];
const volMa10 = [0,603,1,630,2,668,3,695,4,695,5,664,6,617,7,587,8,554,9,530,10,500,11,466,12,450,13,411,14,405,15,432,16,461,17,480,18,498,19,509,20,527,21,545,22,547,23,569,24,573,25,574,27,573,29,578,30,575,31,584,32,596,33,602,34,614,36,623,37,621,38,612,39,609,40,602,41,597,43,578,44,572,45,574,46,572,47,567,48,570,50,584,51,597,52,603,53,618,54,620,55,611,56,609,57,620,58,626,59,629,61,642,62,647,63,641,64,630,65,630,66,633,67,641,68,644,69,650,70,640,71,629,72,602,73,582,74,585,75,597,76,597,77,591,79,594,81,611];

function drawVolume() {
    const svg = document.getElementById('volume');
    add(svg, 'rect', { x: 15, y: 7, width: 1231, height: 7, fill: '#fafafa' });
    add(svg, 'rect', { x: 15, y: 8, width: 1230.5, height: 277, fill: 'none', stroke: '#ebebeb', 'stroke-width': 2 });
    hline(svg, 146, '#eaeaea', 1.5, '4 4');
    volumes.forEach((h, i) => {
        if (candles[i][4]) {
            add(svg, 'rect', { x: x(i) - 4.5, y: 286 - h, width: 9, height: h, fill: GREEN });
        } else {
            add(svg, 'rect', { x: x(i) - 4.5, y: 287 - h, width: 9, height: h - 1.5, fill: '#fff', stroke: '#cf4c4c', 'stroke-width': 2.4 });
        }
    });
    // projected volume of the running day
    add(svg, 'rect', { x: x(81) - 4, y: 229, width: 8, height: 20, fill: '#fff', stroke: '#000', 'stroke-width': 2, 'stroke-dasharray': '2 1.5' });
    curve(svg, volMa5.flatMap((v, i) => [i, v]), '#323232', 3.2, 3);
    curve(svg, volMa10, '#e87848', 3.2, 3);
}

const macdBars = [
    -5,-3,-2,-1,5,14,22,27,31,29,30,28,27,32,30,26,23,17,13,10,8,13,19,25,40,36,45,49,41,33,27,30,31,29,31,45,53,45,24,-1,-16,
    -18,-30,-48,-54,-54,-56,-65,-69,-74,-74,-71,-70,-66,-57,-44,-34,-28,-27,-26,-27,-25,-23,-17,-6,-13,-18,-22,-25,-24,-16,-11,7,23,28,32,29,25,20,15,12,9
];
const diff = [0,627,3,627,4,617,5,595,6,572,7,551,8,537,9,530,10,518,11,508,12,499,13,482,14,472,15,470,16,464,17,470,20,470,21,458,22,441,23,424,24,387,25,378,26,350,27,326,28,321,30,321,31,305,32,291,33,285,34,269,35,231,36,201,37,201,38,217,39,251,40,284,41,294,42,321,43,370,44,399,45,419,46,443,47,478,48,511,49,545,50,577,51,597,52,624,53,641,54,648,55,648,56,644,57,648,58,657,59,662,60,674,61,680,62,687,63,687,64,668,65,685,66,702,67,714,68,725,69,734,70,729,71,726,72,700,73,664,74,648,75,627,76,620,78,618,80,620,81,620];
const dea = [0,620,4,620,5,613,6,606,7,597,8,585,9,572,10,560,11,551,12,542,13,530,14,518,16,500,18,489,20,483,22,470,23,462,25,436,27,400,29,373,31,352,33,327,35,300,36,280,37,263,38,254,39,255,41,266,42,278,43,295,44,314,45,334,46,355,47,382,48,408,49,435,50,464,51,491,52,516,53,542,54,562,55,578,56,593,57,602,58,614,59,622,60,632,61,641,62,650,63,660,64,660,65,665,66,671,67,680,68,690,69,700,70,706,71,709,72,709,73,699,74,686,76,665,78,650,80,640,81,636];

function drawMacd() {
    const svg = document.getElementById('macd');
    add(svg, 'rect', { x: 15, y: 9, width: 1230.5, height: 278, fill: 'none', stroke: '#ebebeb', 'stroke-width': 2 });
    hline(svg, 148, '#e2e2e2', 1.5, '4 4');
    macdBars.forEach((h, i) => {
        add(svg, 'path', { d: `M${x(i)} 213V${213 - h}`, stroke: h > 0 ? '#cf4646' : '#4c9a3c', 'stroke-width': 3 });
    });
    curve(svg, diff, '#2a2a2a', 3.3, 3);
    curve(svg, dea, '#e87848', 3.3, 3);
}

drawKline();
drawVolume();
drawMacd();
```
